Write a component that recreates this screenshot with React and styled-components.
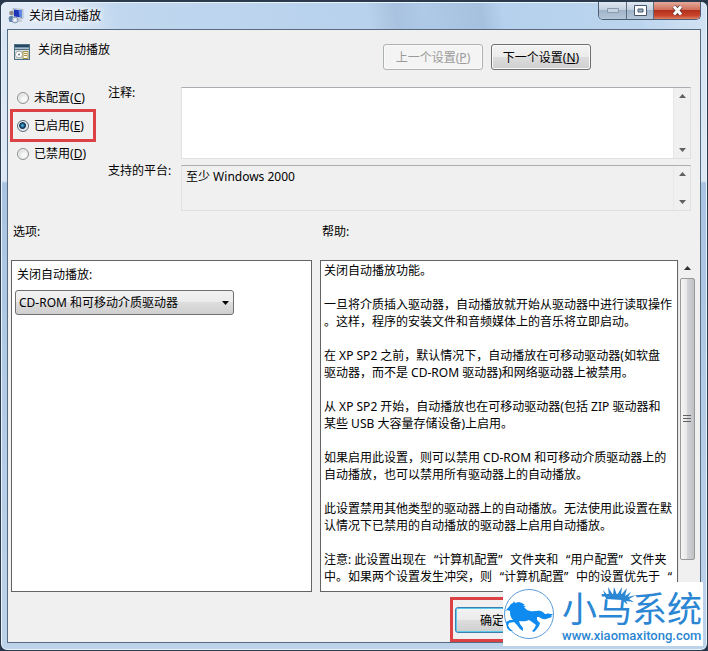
import React, {useState} from 'react';
import styled, {createGlobalStyle} from 'styled-components';

const GlobalStyle = createGlobalStyle`
  * { box-sizing: border-box; }
  body {
    margin: 0;
    background: #27364a;
    font-family: 'Noto Sans', 'Noto Sans CJK SC', sans-serif;
    font-size: 12px;
    line-height: 17px;
    color: #000;
  }
  button, textarea, select, input { font: inherit; color: inherit; }
`;

const Window = styled.div`
  position: relative;
  display: flex;
  flex-direction: column;
  height: 100vh;
  padding: 0 6px 7px;
  border: 1px solid #2b3a4c;
  border-top-width: 2px;
  border-radius: 7px;
  background:
    linear-gradient(80deg, #e2ebf6 0, #dce8f5 10%, #c0d7ef 17%, #b8d1ec 52%, #a8c2df 56%, #afcae7 60%, #a6c1de 68%, #b5d1ed 71%, #bcd5ee 90%, #d4e3f4 100%) top / 100% 28px no-repeat,
    linear-gradient(#d5e3f3 0, #dce8f5 179px, #a9c4e2 181px, #bdd3ea 100%);
  box-shadow: inset 0 0 0 1px #e9f3fc;
`;

const TitleBar = styled.header`
  display: flex;
  align-items: center;
  height: 27px;
  padding-left: 1px;
  gap: 5px;
`;

const Title = styled.h1`
  flex: 1;
  margin: 0;
  font-size: 12px;
  font-weight: 400;
  text-shadow: 0 0 6px #fff, 0 0 6px #fff;
`;

const Controls = styled.div`
  display: flex;
  align-self: flex-start;
  height: 18px;
  border: 1px solid #4e5f74;
  border-top: 0;
  border-radius: 0 0 5px 5px;
  overflow: hidden;
`;

const ControlButton = styled.button`
  display: flex;
  align-items: center;
  justify-content: center;
  width: ${props => props.$close ? '47px' : '27px'};
  padding: 0;
  border: 0;
  border-left: ${props => props.$first ? '0' : '1px solid #5c6d82'};
  background: ${props => props.$close
    ? 'linear-gradient(#e6a99b 0, #d0705c 45%, #b5301b 50%, #c8452c 80%, #dd8263 100%)'
    : 'linear-gradient(#dfe8f2 0, #c4d1df 45%, #a0b3c8 50%, #b4c6d9 100%)'};
`;

const Client = styled.main`
  flex: 1;
  min-height: 0;
  display: flex;
  flex-direction: column;
  border: 1px solid #566a80;
  background: #f0f0f0;
`;

const Heading = styled.div`
  display: flex;
  align-items: flex-start;
  padding: 14px 109px 0 6px;
`;

const PolicyName = styled.h2`
  flex: 1;
  margin: -3px 0 0 8px;
  font-size: 12px;
  font-weight: 400;
`;

const Buttons = styled.div`
  display: flex;
  gap: 8px;
`;

const Button = styled.button`
  width: 100px;
  height: 26px;
  padding: 0;
  border: 1px solid #707070;
  border-radius: 3px;
  background: linear-gradient(#f3f3f3 0, #ebebeb 49%, #dddddd 50%, #cfcfcf 100%);
  box-shadow: inset 0 0 0 1px #fafafa;

  &:disabled {
    border-color: #adb2b5;
    background: #f4f4f4;
    color: #9a9a9a;
  }
`;

const OkButton = styled(Button)`
  width: 74px;
  border-color: #3c7fb1;
  box-shadow: inset 0 0 0 1px #5cc8ec;
`;

const Settings = styled.div`
  display: flex;
  padding: 16px 9px 0 2px;
`;

const States = styled.fieldset`
  width: 98px;
  margin: 0;
  padding: 0;
  border: 0;
`;

const State = styled.label`
  display: flex;
  align-items: center;
  gap: 5px;
  width: 86px;
  height: ${props => props.$marked ? '33px' : '23px'};
  padding-left: ${props => props.$marked ? '4px' : '7px'};
  border: ${props => props.$marked ? '3px solid #dc4146' : '0'};
`;

const Radio = styled.input`
  appearance: none;
  flex: none;
  width: 12px;
  height: 12px;
  margin: 0;
  border: 1px solid #8e8f8f;
  border-radius: 50%;
  background: radial-gradient(circle at 60% 60%, #f8f8f8 20%, #c4c8cc 100%);
  box-shadow: inset 0 0 0 1px #f4f4f4;

  &:checked {
    border-color: #5a6a78;
    background: radial-gradient(circle at 45% 45%, #5cc0e8 0, #1a5a84 25%, #0d2f4c 38%, #d5dde4 50%);
  }
`;

const Fields = styled.div`
  flex: 1;
  display: grid;
  grid-template-columns: 73px 1fr;
  grid-template-rows: 72px 46px;
  row-gap: 6px;
  padding-top: 1px;
`;

const FieldLabel = styled.label`
  margin-top: -3px;
`;

const Field = styled.div`
  display: flex;
  border: 1px solid #dde0e5;
  border-top-color: #abadb3;
  background: ${props => props.$readOnly ? '#f0f0f0' : '#fff'};
`;

const TextArea = styled.textarea`
  flex: 1;
  min-width: 0;
  padding: 2px 4px;
  border: 0;
  outline: 0;
  background: none;
  resize: none;
  overflow: hidden;
`;

const ScrollBar = styled.div`
  display: flex;
  flex-direction: column;
  justify-content: space-between;
  align-items: center;
  flex: none;
  width: 17px;
  background: #f0f0f0;
  border-left: 1px solid #e8e8e8;
`;

const ScrollButton = styled.button`
  display: flex;
  align-items: center;
  justify-content: center;
  flex: none;
  width: 15px;
  height: 16px;
  padding: 0;
  border: 0;
  background: none;
`;

const Thumb = styled.div`
  display: flex;
  align-items: center;
  justify-content: center;
  width: 15px;
  height: 282px;
  margin: 2px 0 auto;
  border: 1px solid #989898;
  border-radius: 2px;
  background: linear-gradient(90deg, #f6f6f6 0, #e8e8ea 45%, #d2d3d6 50%, #c0c1c5 100%);
`;

const Panes = styled.div`
  flex: 1;
  min-height: 0;
  display: grid;
  grid-template-columns: 301px 1fr;
  grid-template-rows: 17px 1fr;
  column-gap: 8px;
  row-gap: 20px;
  padding: 12px 5px 0 3px;
`;

const PaneLabel = styled.div`
  padding-left: 2px;
`;

const Pane = styled.section`
  padding: 5px 3px;
  border: 1px solid #646464;
  background: #fff;
`;

const OptionLabel = styled.label`
  display: block;
  margin-bottom: 7px;
  padding-left: 2px;
`;

const SelectBox = styled.div`
  display: flex;
  align-items: center;
  width: 219px;
  height: 25px;
  padding-right: 4px;
  border: 1px solid #707070;
  border-radius: 3px;
  background: linear-gradient(#f2f2f2 0, #ebebeb 49%, #dddddd 50%, #cfcfcf 100%);
`;

const Select = styled.select`
  appearance: none;
  flex: 1;
  height: 23px;
  padding: 0 3px;
  border: 0;
  outline: 0;
  background: none;
`;

const HelpArea = styled.div`
  display: flex;
  min-height: 0;
`;

const HelpText = styled.section`
  flex: 1;
  min-width: 0;
  padding: 1px 3px 0;
  border: 1px solid #646464;
  background: #fff;
  overflow: hidden;
`;

const Paragraph = styled.p`
  margin: 0 0 17px;
  white-space: pre;
`;

const Quote = styled.span`
  display: inline-block;
  width: 12px;
  text-align: ${props => props.$open ? 'right' : 'left'};
`;

const Footer = styled.footer`
  display: flex;
  height: 50px;
  padding: 5px 0 0 442px;
`;

const Marked = styled.div`
  width: 84px;
  height: 45px;
  padding: 7px 2px;
  border: 3px solid #dc4146;
`;

const Watermark = styled.div`
  position: absolute;
  right: 4px;
  bottom: 4px;
  display: flex;
  align-items: center;
  gap: 7px;
  width: 200px;
  height: 64px;
  background: #fff;
  color: #2b86d3;
`;

const Brand = styled.div`
  position: relative;
  flex: none;
  width: 140px;
`;

const BrandName = styled.div`
  font-family: 'Noto Sans CJK SC', sans-serif;
  font-size: 35px;
  line-height: 44px;
  white-space: nowrap;
`;

const Mane = styled.svg`
  position: absolute;
  left: 40px;
  top: 1px;
`;

const BrandLink = styled.a`
  display: block;
  font-family: Roboto, sans-serif;
  font-size: 13px;
  font-weight: 500;
  line-height: 14px;
  color: inherit;
  text-decoration: none;
`;

const Arrow = ({down, color = '#606060'}) => (
  <svg width="7" height="4" viewBox="0 0 7 4">
    <path d={down ? 'M0 0h7L3.5 4z' : 'M0 4h7L3.5 0z'} fill={color}/>
  </svg>
);

const AppIcon = () => (
  <svg width="16" height="16" viewBox="0 0 16 16">
    <path d="M5 .5l10 1v9L5 9.500z" fill="#dfe6ee" stroke="#8b98a8" strokeWidth=".6"/>
    <path d="M6 1.500l8 1v7L6 8.500z" fill="#1c35b8"/>
    <path d="M10.500 2.200l3.500.4v6.800l-2.500-.3z" fill="#5f86e6"/>
    <path d="M9 10.500h4l1.500 3.500H9z" fill="#c5ccd4"/>
    <circle cx="3.500" cy="5" r="2.300" fill="#8e8a84"/>
    <path d="M.5 10q2-4 5.500-.5l.5 4.500H1.500z" fill="#5c80ac"/>
    <circle cx="7" cy="12" r="3" fill="#d3deea" stroke="#8497ae"/>
    <circle cx="7" cy="12" r="1" fill="#fff"/>
  </svg>
);

const PolicyIcon = () => (
  <svg width="16" height="16" viewBox="0 0 16 16">
    <path d="M0 0h16v16H0z" fill="#4d7186"/>
    <path d="M1 1h14v2H1z" fill="#254964"/>
    <path d="M1 3.500h14v1.500H1z" fill="#a9bcc8"/>
    <path d="M1 6h14v9H1z" fill="#d9dfd8"/>
    <circle cx="5" cy="10.500" r="3.500" fill="#fff" stroke="#a0a8a8"/>
    <circle cx="5" cy="10.500" r="1" fill="#56707c"/>
    <path d="M9 7.500h5v7H9z" fill="#fffbe6" stroke="#a68f4a"/>
    <path d="M10 9.500h3M10 11.500h3" stroke="#a68f4a"/>
  </svg>
);

const HorseLogo = () => (
  <svg width="52" height="52" viewBox="0 0 52 52">
    <circle cx="26" cy="26" r="24.500" fill="#fff" stroke="#5b9bd8"/>
    <path
      fill="#0f8bf0"
      d="M5 20l3-4 2-1 1-2 1 2 4-1 3 1 3 2-2 0 3 2-2 0 3 3 3 1c4 1 7-1 11 0 2 1 3 2 4 3 2 0 3-1 5 0l3 0-2 2 1 1-3 1-3 1c-3 1-5-1-7-2l-2 0 0 3 3 3-1 3-3 4-2 2-2-1 2-2 2-4-4-3-3-2c-4 2-7 1-10 1l1 3 3 4 0 3-3-2-3-4-3-3-5 1-1 3 2 3 3 2-3 0-3-3-1-6 4-2 3 0c-3-3-3-6-3-9l-3-1-3 2z"
    />
  </svg>
);

const states = [
  {id: 'none', text: '未配置', key: 'C'},
  {id: 'on', text: '已启用', key: 'E'},
  {id: 'off', text: '已禁用', key: 'D'},
];

const help = [
  '关闭自动播放功能。',
  '一旦将介质插入驱动器，自动播放就开始从驱动器中进行读取操作\n。这样，程序的安装文件和音频媒体上的音乐将立即启动。',
  '在 XP SP2 之前，默认情况下，自动播放在可移动驱动器(如软盘\n驱动器，而不是 CD-ROM 驱动器)和网络驱动器上被禁用。',
  '从 XP SP2 开始，自动播放也在可移动驱动器(包括 ZIP 驱动器和\n某些 USB 大容量存储设备)上启用。',
  '如果启用此设置，则可以禁用 CD-ROM 和可移动介质驱动器上的\n自动播放，也可以禁用所有驱动器上的自动播放。',
  '此设置禁用其他类型的驱动器上的自动播放。无法使用此设置在默\n认情况下已禁用的自动播放的驱动器上启用自动播放。',
  '注意: 此设置出现在“计算机配置”文件夹和“用户配置”文件夹\n中。如果两个设置发生冲突，则“计算机配置”中的设置优先于“',
];

// chinese quotes take a full cell, the latin font would draw them narrow
const withQuotes = text => text.split(/([“”])/).map((part, i) => (
  i % 2 ? <Quote key={i} $open={part === '“'}>{part}</Quote> : part
));

const Scroll = ({color, children}) => (
  <ScrollBar>
    <ScrollButton type="button" aria-label="向上滚动"><Arrow color={color}/></ScrollButton>
    {children}
    <ScrollButton type="button" aria-label="向下滚动"><Arrow down color={color}/></ScrollButton>
  </ScrollBar>
);

export default function App() {
  const [state, setState] = useState('on');
  const [comment, setComment] = useState('');

  return (
    <>
      <GlobalStyle/>
      <Window>
        <TitleBar>
          <AppIcon/>
          <Title>关闭自动播放</Title>
          <Controls>
            <ControlButton $first type="button" aria-label="最小化">
              <svg width="12" height="5"><path d="M.5.5h11v4H.5z" fill="#c5d3e0" stroke="#8a9bae"/></svg>
            </ControlButton>
            <ControlButton type="button" aria-label="最大化">
              <svg width="13" height="11">
                <path d="M.5.5h12v10H.5z" fill="#fff" stroke="#47566b"/>
                <path d="M4 4h5v3H4z" fill="#9fb2c6" stroke="#47566b"/>
              </svg>
            </ControlButton>
            <ControlButton $close type="button" aria-label="关闭">
              <svg width="13" height="11">
                <path d="M3 1.500l7 8M10 1.500l-7 8" stroke="#5b3438" strokeWidth="4.500"/>
                <path d="M3 1.500l7 8M10 1.500l-7 8" stroke="#fff" strokeWidth="3"/>
              </svg>
            </ControlButton>
          </Controls>
        </TitleBar>
        <Client>
          <Heading>
            <PolicyIcon/>
            <PolicyName>关闭自动播放</PolicyName>
            <Buttons>
              <Button type="button" disabled>上一个设置(<u>P</u>)</Button>
              <Button type="button">下一个设置(<u>N</u>)</Button>
            </Buttons>
          </Heading>
          <Settings>
            <States>
              {states.map(({id, text, key}) => (
                <State key={id} $marked={id === 'on'}>
                  <Radio type="radio" name="state" checked={state === id} onChange={() => setState(id)}/>
                  <span>{text}(<u>{key}</u>)</span>
                </State>
              ))}
            </States>
            <Fields>
              <FieldLabel htmlFor="comment">注释:</FieldLabel>
              <Field>
                <TextArea id="comment" value={comment} onChange={e => setComment(e.target.value)}/>
                <Scroll/>
              </Field>
              <FieldLabel htmlFor="platform">支持的平台:</FieldLabel>
              <Field $readOnly>
                <TextArea id="platform" readOnly value="至少 Windows 2000"/>
                <Scroll/>
              </Field>
            </Fields>
          </Settings>
          <Panes>
            <PaneLabel>选项:</PaneLabel>
            <PaneLabel>帮助:</PaneLabel>
            <Pane>
              <OptionLabel htmlFor="drives">关闭自动播放:</OptionLabel>
              <SelectBox>
                <Select id="drives">
                  <option>CD-ROM 和可移动介质驱动器</option>
                  <option>所有驱动器</option>
                </Select>
                <Arrow down color="#000"/>
              </SelectBox>
            </Pane>
            <HelpArea>
              <HelpText>
                {help.map(text => <Paragraph key={text}>{withQuotes(text)}</Paragraph>)}
              </HelpText>
              <Scroll color="#303030">
                <Thumb>
                  <svg width="8" height="8"><path d="M0 .5h8M0 3.500h8M0 6.500h8" stroke="#606060"/></svg>
                </Thumb>
              </Scroll>
            </HelpArea>
          </Panes>
          <Footer>
            <Marked><OkButton type="button">确定</OkButton></Marked>
          </Footer>
        </Client>
        <Watermark>
          <HorseLogo/>
          <Brand>
            <BrandName>小马系统</BrandName>
            <Mane width="36" height="18" viewBox="0 0 36 18">
              <path d="M4 13L1 4l6 7L6 1l5 8 1-8 3 8 5-8-1 8 6-7-2 8 6-4-3 5 8-2-7 4 5 3-8-1 2 4-6-5z" fill="#2b86d3"/>
            </Mane>
            <BrandLink href="#home">www.xiaomaxitong.com</BrandLink>
          </Brand>
        </Watermark>
      </Window>
    </>
  );
}
